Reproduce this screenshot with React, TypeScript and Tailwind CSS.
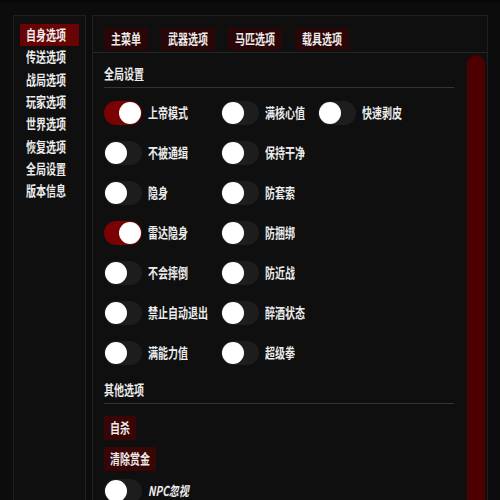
import { ReactNode } from "react";

const sideItems = ["自身选项", "传送选项", "战局选项", "玩家选项", "世界选项", "恢复选项", "全局设置", "版本信息"];
const tabs = ["主菜单", "武器选项", "马匹选项", "载具选项"];

// each row: [label, on] per column
const globalRows: [string, boolean][][] = [
  [["上帝模式", true], ["满核心值", false], ["快速剥皮", false]],
  [["不被通缉", false], ["保持干净", false]],
  [["隐身", false], ["防套索", false]],
  [["雷达隐身", true], ["防捆绑", false]],
  [["不会摔倒", false], ["防近战", false]],
  [["禁止自动退出", false], ["醉酒状态", false]],
  [["满能力值", false], ["超级拳", false]],
];

const colWidths = ["w-[117px]", "w-[97px]", "w-[100px]"];

function Txt({ children, className = "" }: { children: ReactNode; className?: string }) {
  return (
    <span className={`inline-block scale-y-[1.35] text-[10px] leading-none font-bold ${className}`}>
      {children}
    </span>
  );
}

function Toggle({ on }: { on: boolean }) {
  return (
    <div
      className={`flex h-[24px] w-[38px] shrink-0 items-center rounded-full px-[1px] ${
        on ? "justify-end bg-[#7a0202]" : "justify-start bg-[#1d1d1d]"
      }`}
    >
      <div className="h-[22px] w-[22px] rounded-full bg-white" />
    </div>
  );
}

function ToggleItem({ label, on, italic }: { label: string; on: boolean; italic?: boolean }) {
  return (
    <div className="flex items-center gap-[6px]">
      <Toggle on={on} />
      <Txt className={italic ? "italic" : ""}>{label}</Txt>
    </div>
  );
}

function SectionHeader({ title }: { title: string }) {
  return (
    <div className="mr-[13px]">
      <div className="flex h-[20px] items-center">
        <Txt>{title}</Txt>
      </div>
      <div className="mt-[3px] h-px bg-[#343434]" />
    </div>
  );
}

function RedButton({ label }: { label: string }) {
  return (
    <div className="flex h-[24px] w-fit items-center bg-[#3a0505] px-[6px]">
      <Txt>{label}</Txt>
    </div>
  );
}

export default function App() {
  return (
    <div
      className="flex h-[500px] w-[500px] overflow-hidden border-t-[3px] border-[#080808] bg-[#0c0c0c] pl-[13px] pr-[12px] pt-[12px] text-[#ececec]"
      style={{ fontFamily: '"Noto Sans CJK SC", "Noto Sans", sans-serif' }}
    >
      {/* side menu */}
      <div className="w-[73px] shrink-0 border border-b-0 border-[#1f1f1f] bg-[#0f0f0f] px-[6px] pt-[8px]">
        {sideItems.map((item, i) => (
          <div
            key={item}
            className={`flex h-[22.3px] items-center px-[6px] ${i === 0 ? "bg-[#6a0303]" : ""}`}
          >
            <Txt>{item}</Txt>
          </div>
        ))}
      </div>

      {/* main panel */}
      <div className="ml-[6px] flex flex-1 flex-col border border-b-0 border-[#1f1f1f] bg-[#0f0f0f]">
        <div className="flex gap-[13px] border-b border-[#262626] px-[11px] pb-[2px] pt-[12px]">
          {tabs.map((t) => (
            <div key={t} className="flex h-[22px] items-center bg-[#2a0606] px-[7px]">
              <Txt>{t}</Txt>
            </div>
          ))}
        </div>

        <div className="flex min-h-0 flex-1">
          <div className="flex-1 pl-[11px] pt-[11px]">
            <SectionHeader title="全局设置" />

            <div className="mt-[13px] flex flex-col gap-[16px]">
              {globalRows.map((row, r) => (
                <div key={r} className="flex">
                  {row.map(([label, on], c) => (
                    <div key={label} className={colWidths[c]}>
                      <ToggleItem label={label} on={on} />
                    </div>
                  ))}
                </div>
              ))}
            </div>

            <div className="mt-[15px]">
              <SectionHeader title="其他选项" />
            </div>

            <div className="mt-[12px] flex flex-col gap-[7px]">
              <RedButton label="自杀" />
              <RedButton label="清除赏金" />
            </div>
            <div className="mt-[8px]">
              <ToggleItem label="NPC忽视" on={false} italic />
            </div>
          </div>

          {/* scroll bar */}
          <div className="mr-[2px] mt-[2px] w-[18px] shrink-0 rounded-t-full bg-[#4e0000]" />
        </div>
      </div>
    </div>
  );
}
